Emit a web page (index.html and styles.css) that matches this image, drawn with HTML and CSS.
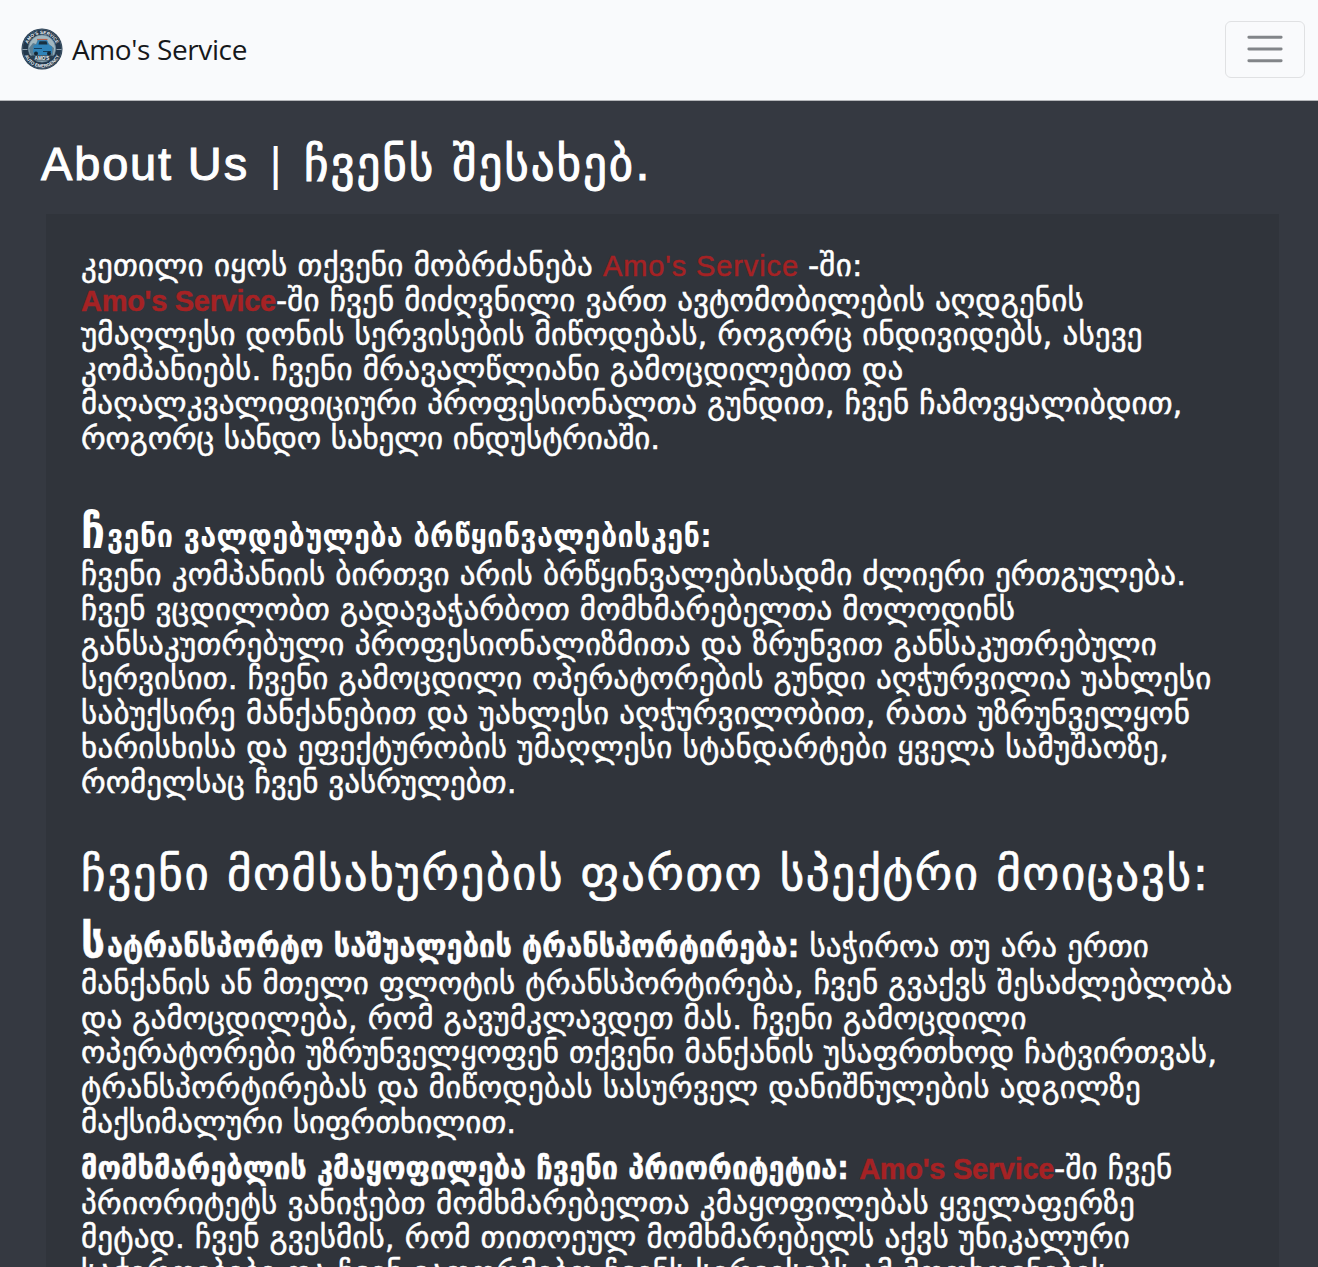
FILE: index.html
```html
<!DOCTYPE html>
<html lang="ka">
<head>
<meta charset="utf-8">
<title>Amo's Service</title>
<link rel="stylesheet" href="styles.css">
</head>
<body>
<nav class="navbar">
  <a class="brand">
    <svg class="logo" viewBox="0 0 42 42">
      <circle cx="21" cy="21" r="20.5" fill="#23384c"/>
      <circle cx="21" cy="21" r="19.5" fill="none" stroke="#51677a" stroke-width=".7"/>
      <circle cx="21" cy="20.500" r="13.600" fill="#a3b8c0" stroke="#6f8ea2" stroke-width=".8"/>
      <path d="M8 20l4-5 3 1 2-5h8l3 5 5 4-1 7-5 2H12l-3-4z" fill="#5d7f93"/>
      <path d="M12.500 17.500l3-1 1.500-4.500h9l2 5 3 1.500V25l-3 2H15l-3-3z" fill="#2f83b8"/>
      <path d="M17.500 16.500l1-3.200h7l1 3.200z" fill="#18303f"/>
      <path d="M16 11.500h10.500" stroke="#b8604a" stroke-width="1.200"/>
      <path d="M13 20.500h8M22 23.500h8" stroke="#173f5c" stroke-width="1.200"/>
      <circle cx="15" cy="25.500" r="2" fill="#142533"/><circle cx="28" cy="25.500" r="2" fill="#142533"/>
      <path d="M9 27.500h24l-3 5H12z" fill="#293f50"/>
      <path d="M1.500 21.500h5M35.500 21.500h5" stroke="#a9bac6" stroke-width=".8"/>
      <path id="arc-top" d="M6 21a15 15 0 0 1 30 0" fill="none"/>
      <path id="arc-bottom" d="M2.500 21a18.500 18.500 0 0 0 37 0" fill="none"/>
      <text class="logo-text" text-anchor="middle"><textPath href="#arc-top" startOffset="50%">AMO'S SERVICE</textPath></text>
      <text class="logo-text" text-anchor="middle"><textPath href="#arc-bottom" startOffset="50%">AUTO EMERGENCY</textPath></text>
      <text class="logo-text" x="21" y="32" text-anchor="middle">AMO'S</text>
    </svg>
    <span class="brand-name">Amo's Service</span>
  </a>
  <button class="toggler" aria-label="Menu">
    <svg class="toggler-icon" viewBox="0 0 30 30"><path stroke="#212529" stroke-opacity=".55" stroke-linecap="round" stroke-width="2" d="M4 7h22M4 15h22M4 23h22"/></svg>
  </button>
</nav>
<main>
  <h1 class="title"><span class="latin">About Us</span><span class="bar">|</span><span>ჩვენს შესახებ.</span></h1>
  <section class="card">
    <p class="text">
      <span class="line loose">კეთილი იყოს თქვენი მობრძანება <span class="name">Amo's Service </span>-ში:</span>
      <span class="line"><b class="name">Amo's Service</b>-ში ჩვენ მიძღვნილი ვართ ავტომობილების აღდგენის</span>
      <span class="line">უმაღლესი დონის სერვისების მიწოდებას, როგორც ინდივიდებს, ასევე</span>
      <span class="line loose">კომპანიებს. ჩვენი მრავალწლიანი გამოცდილებით და</span>
      <span class="line">მაღალკვალიფიციური პროფესიონალთა გუნდით, ჩვენ ჩამოვყალიბდით,</span>
      <span class="line tight">როგორც სანდო სახელი ინდუსტრიაში.</span>
    </p>
    <h2 class="lead"><span class="line"><span class="initial">ჩ</span>ვენი ვალდებულება ბრწყინვალებისკენ:</span></h2>
    <p class="text">
      <span class="line">ჩვენი კომპანიის ბირთვი არის ბრწყინვალებისადმი ძლიერი ერთგულება.</span>
      <span class="line">ჩვენ ვცდილობთ გადავაჭარბოთ მომხმარებელთა მოლოდინს</span>
      <span class="line loose">განსაკუთრებული პროფესიონალიზმითა და ზრუნვით განსაკუთრებული</span>
      <span class="line">სერვისით. ჩვენი გამოცდილი ოპერატორების გუნდი აღჭურვილია უახლესი</span>
      <span class="line loose">საბუქსირე მანქანებით და უახლესი აღჭურვილობით, რათა უზრუნველყონ</span>
      <span class="line loose">ხარისხისა და ეფექტურობის უმაღლესი სტანდარტები ყველა სამუშაოზე,</span>
      <span class="line snug">რომელსაც ჩვენ ვასრულებთ.</span>
    </p>
    <h2 class="services">ჩვენი მომსახურების ფართო სპექტრი მოიცავს:</h2>
    <p class="text">
      <span class="line first"><b><span class="initial">ს</span>ატრანსპორტო საშუალების ტრანსპორტირება: </b>საჭიროა თუ არა ერთი</span>
      <span class="line">მანქანის ან მთელი ფლოტის ტრანსპორტირება, ჩვენ გვაქვს შესაძლებლობა</span>
      <span class="line">და გამოცდილება, რომ გავუმკლავდეთ მას. ჩვენი გამოცდილი</span>
      <span class="line">ოპერატორები უზრუნველყოფენ თქვენი მანქანის უსაფრთხოდ ჩატვირთვას,</span>
      <span class="line loose">ტრანსპორტირებას და მიწოდებას სასურველ დანიშნულების ადგილზე</span>
      <span class="line snug">მაქსიმალური სიფრთხილით.</span>
    </p>
    <p class="text last">
      <span class="line"><b>მომხმარებლის კმაყოფილება ჩვენი პრიორიტეტია: </b><b class="name">Amo's Service</b>-ში ჩვენ</span>
      <span class="line loose">პრიორიტეტს ვანიჭებთ მომხმარებელთა კმაყოფილებას ყველაფერზე</span>
      <span class="line">მეტად. ჩვენ გვესმის, რომ თითოეულ მომხმარებელს აქვს უნიკალური</span>
      <span class="line loose">საჭიროებები და ჩვენ ვაფორმებთ ჩვენს სერვისებს ამ მოთხოვნების</span>
    </p>
  </section>
</main>
</body>
</html>
```
FILE: styles.css
```css
* { box-sizing: border-box; }
html { overflow: hidden; }
body { margin: 0; height: 1267px; overflow: hidden; background: #353941; color: #fff; font-family: "DejaVu Sans", sans-serif; }
.navbar { display: flex; align-items: center; justify-content: space-between; height: 101px; padding: 0 13px 2px 21px; background: #f9fafc; border-bottom: 1px solid #b5b7ba; }
.brand { display: flex; align-items: center; gap: 9px; color: #16181b; }
.logo { width: 42px; height: 42px; }
.logo-text { font: 700 4.600px "Liberation Sans", sans-serif; fill: #f0f4f7; }
.brand-name { font: 28px/42px "Open Sans", sans-serif; letter-spacing: -.38px; white-space: nowrap; }
.toggler { display: flex; align-items: center; justify-content: center; width: 80px; height: 57px; padding: 0; background: none; border: 1px solid #e0e1e3; border-radius: 6px; }
.toggler-icon { width: 44px; height: 44px; }

.title { margin: 34px 0 0 41px; font-size: 47px; line-height: 57.600px; font-weight: 400; letter-spacing: 1.940px; white-space: nowrap; -webkit-text-stroke: 1px; }
.latin { font-family: "Liberation Sans", sans-serif; letter-spacing: 1.830px; }
.bar { display: inline-block; width: 55px; text-align: center; font-family: "Liberation Sans", sans-serif; -webkit-text-stroke: 0; }

.card { margin: 21px 39px 0 46px; padding: 34.500px 0 60px 35px; background: #30343b; }
.text { margin: 0; font-size: 31px; letter-spacing: .140px; -webkit-text-stroke: .5px; }
.line { display: block; height: 34.560px; line-height: 34.560px; white-space: pre; }
.loose { letter-spacing: .230px; }
.snug { letter-spacing: 0; }
.tight { letter-spacing: -.120px; }
.lead { margin: 64px 0 3.500px; font-size: 32px; font-weight: 700; letter-spacing: .370px; }
.lead, b { font-family: "DejaVu Sans Condensed", "DejaVu Sans", sans-serif; }
b { font-size: 32px; letter-spacing: .130px; }
.name { color: #a52224; font-family: "Liberation Sans", sans-serif; font-size: 29px; letter-spacing: .890px; }
b.name { letter-spacing: -.290px; }
.initial { display: inline-block; width: 26px; font-size: 47px; line-height: 0; letter-spacing: 0; }
.services { margin: 45.500px 0 27px; font-size: 47px; line-height: 57.600px; font-weight: 400; letter-spacing: 1.590px; white-space: nowrap; -webkit-text-stroke: .7px; }
.first { margin-bottom: 2.500px; }
.last { margin-top: 12px; }
```
